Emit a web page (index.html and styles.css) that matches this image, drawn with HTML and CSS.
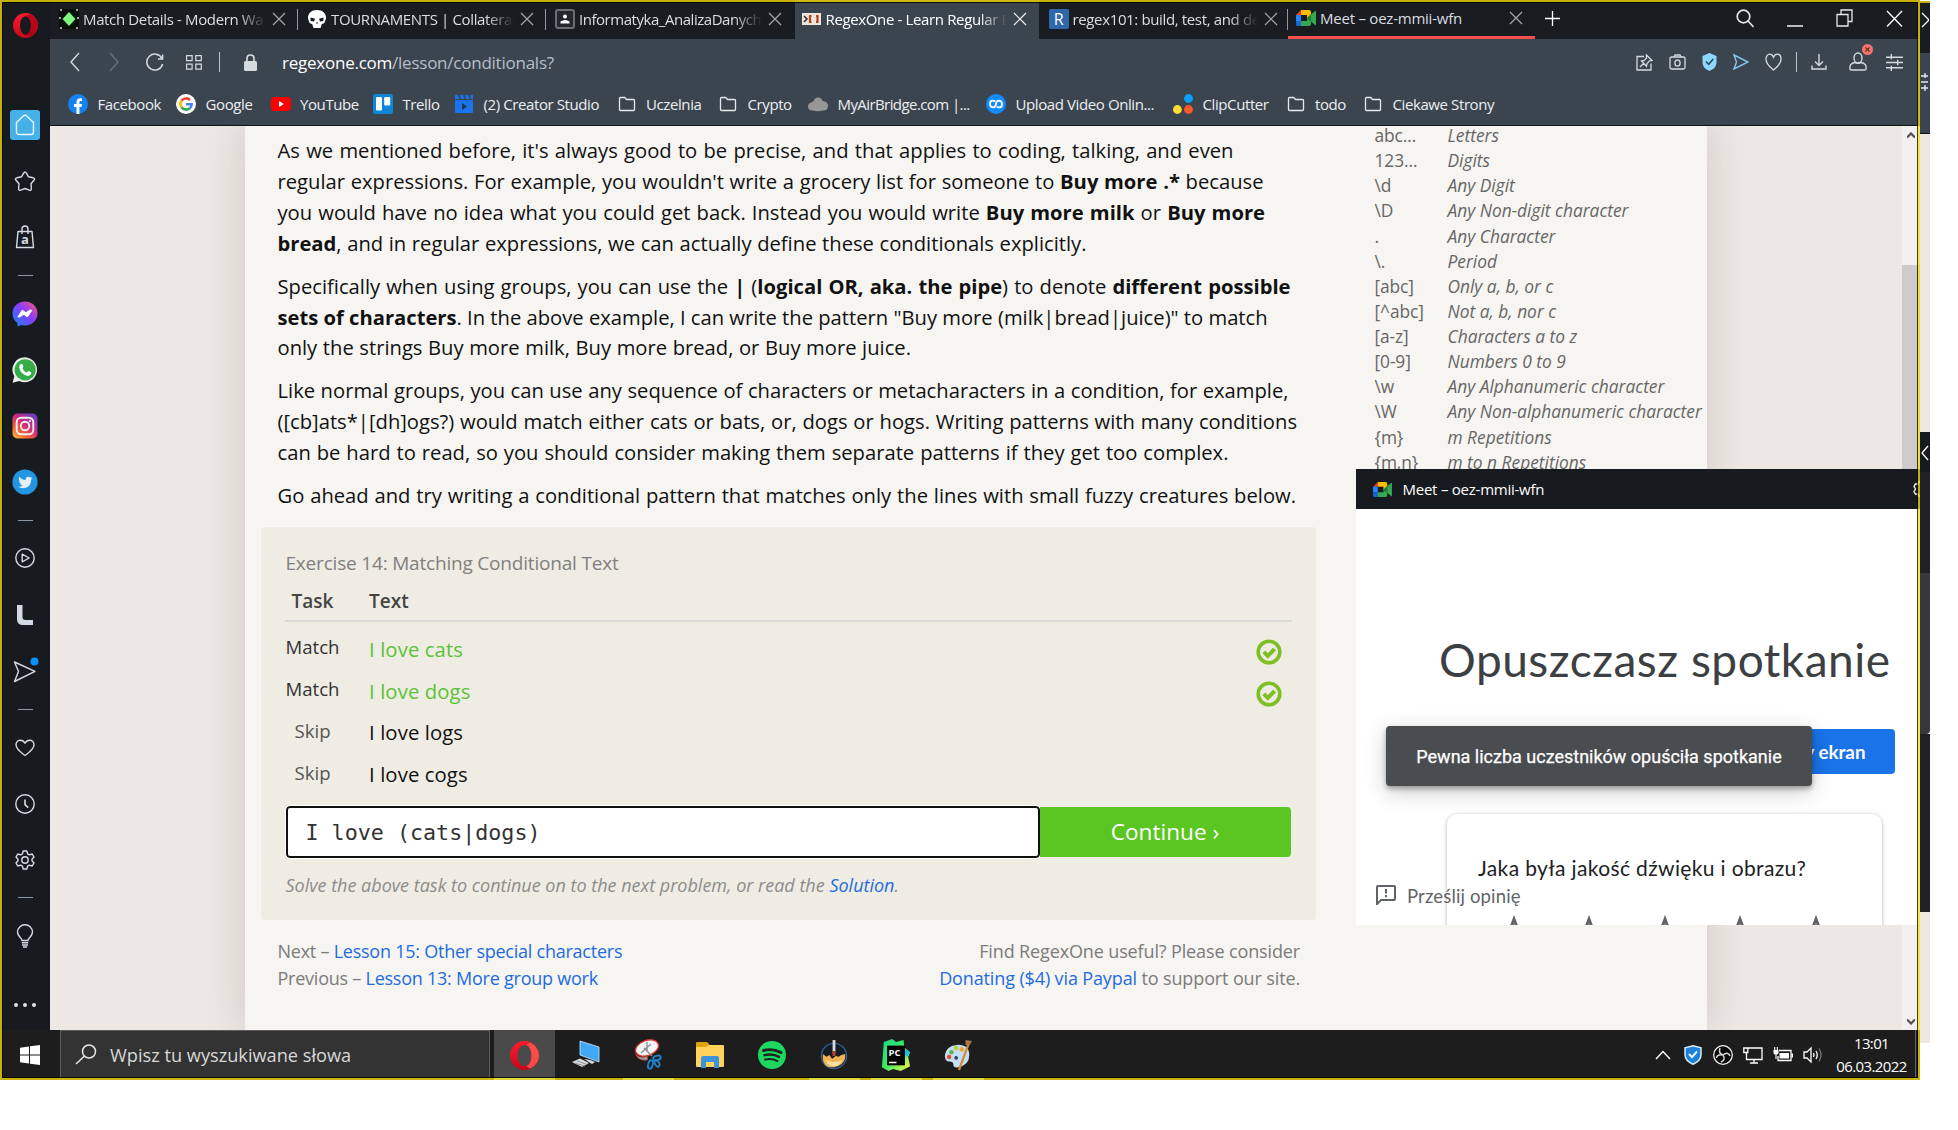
FILE: index.html
```html
<!DOCTYPE html>
<html lang="pl">
<head>
<meta charset="utf-8">
<title>RegexOne - Learn Regular Expressions</title>
<link rel="stylesheet" href="styles.css">
</head>
<body>
<svg class="defs" aria-hidden="true">
  <defs>
    <linearGradient id="g-opera" x1="0" y1="0" x2="0" y2="1"><stop offset="0" stop-color="#ff1b2d"/><stop offset="1" stop-color="#c40a1c"/></linearGradient>
    <linearGradient id="g-msg" x1="0" y1="1" x2="1" y2="0"><stop offset="0" stop-color="#0a8cff"/><stop offset=".55" stop-color="#8a3bff"/><stop offset="1" stop-color="#ff5a6c"/></linearGradient>
    <linearGradient id="g-ig" x1="0" y1="1" x2=".8" y2="0"><stop offset="0" stop-color="#fcc24e"/><stop offset=".3" stop-color="#f3672f"/><stop offset=".6" stop-color="#d32a7c"/><stop offset="1" stop-color="#6a3fc0"/></linearGradient>
    <linearGradient id="g-pc" x1="0" y1="0" x2="1" y2="1"><stop offset="0" stop-color="#21d789"/><stop offset=".5" stop-color="#3bea62"/><stop offset="1" stop-color="#fcf84a"/></linearGradient>
    <symbol id="close" viewBox="0 0 14 14"><path d="M1 1l12 12M13 1L1 13" fill="none" stroke="currentColor" stroke-width="1.2"/></symbol>
    <symbol id="folder" viewBox="0 0 20 20"><path d="M2.5 4.5c0-.6.4-1 1-1h4.3l1.7 2h7c.6 0 1 .4 1 1v9c0 .6-.4 1-1 1h-13c-.6 0-1-.4-1-1z" fill="none" stroke="#e6e9ec" stroke-width="1.3"/></symbol>
    <symbol id="opera" viewBox="0 0 26 26"><path fill="url(#g-opera)" fill-rule="evenodd" d="M13 0a13 13 0 1 0 0 26 13 13 0 0 0 0-26zm0 3.5c3.3 0 5.6 4.2 5.6 9.5s-2.3 9.5-5.6 9.5-5.6-4.2-5.6-9.5S9.700 3.500 13 3.500z"/><path fill="#a70014" d="M13 3.500C16 .8 20 1.500 22 4c5 5 5 13 0 18-2 2.500-6 3.200-9 .5 3.300 0 5.600-4.200 5.600-9.500S16.300 3.500 13 3.500z" opacity=".75"/></symbol>
    <symbol id="opera-lit" viewBox="0 0 26 26"><path fill="url(#g-opera)" fill-rule="evenodd" d="M13 0a13 13 0 1 0 0 26 13 13 0 0 0 0-26zm0 3.500c3.600 0 6.200 4.200 6.200 9.500s-2.600 9.500-6.200 9.500-6.200-4.200-6.200-9.500S9.400 3.500 13 3.500z"/><path fill="#ff5a52" d="M19 1.700c4.200 2.500 7 6.700 7 11.300s-2.800 8.800-7 11.300c-1.500.3-3-.3-4-1.800 2.600-1.300 4.200-5 4.200-9.500S17.600 4.800 15 3.500c1-1.500 2.500-2.100 4-1.800z" opacity=".8"/></symbol>
    <symbol id="meet" viewBox="0 0 20 18"><path fill="#e8402f" d="M0 6L5 1v5z"/><path fill="#fbbc04" d="M5 1h8c1 0 2 .7 2 2v4l-4 3V6H5z"/><path fill="#2684fc" d="M0 6h5v6H0z"/><path fill="#1a66d6" d="M0 12h5v5H1.500C.6 17 0 16.400 0 15.500z"/><path fill="#34a853" d="M5 12h6v-2l4 1v4c0 1.300-1 2-2 2H5z"/><path fill="#188038" d="M11 9l4-4v8z"/><path fill="#34a853" d="M15 5.500L19 2c.6-.4 1 0 1 .5v13c0 .6-.4.900-1 .5l-4-3.500z"/></symbol>
    <symbol id="heart" viewBox="0 0 20 18"><path d="M10 16.500C8 15 1 10.500 1 5.800 1 3 3 1.200 5.400 1.200c2 0 3.600 1 4.600 3 1-2 2.600-3 4.600-3C17 1.200 19 3 19 5.800c0 4.700-7 9.200-9 10.700z" fill="none" stroke="currentColor" stroke-width="1.400" stroke-linejoin="round"/></symbol>
    <symbol id="check" viewBox="0 0 26 26"><circle cx="13" cy="13" r="10.800" fill="none" stroke="#7fbf26" stroke-width="3.600"/><path d="M7.800 12.800l4 4 6.800-6.800" fill="none" stroke="#7fbf26" stroke-width="4"/></symbol>
    <symbol id="tune" viewBox="0 0 16 16"><path d="M0 3h16M0 8h16M0 13h16M5 0v5M11 5.500v5M5 11v5" fill="none" stroke="currentColor" stroke-width="1.300"/></symbol>
    <symbol id="star" viewBox="0 0 20 19"><path d="M10 0l6 16v3H4v-3z" fill="#5f6368"/><path d="M10 8l2 11H8z" fill="#fff"/></symbol>
  </defs>
</svg>

<div class="desktop">
<div class="screen">
  <div class="upper">
    <nav class="rail">
      <div class="logo"><svg width="25" height="25"><use href="#opera"/></svg></div>
      <div class="ri"><span class="home"><svg width="20" height="22" viewBox="0 0 20 22"><path d="M1.500 8.500L8 2.200Q10 .5 12 2.200L18.500 8.500V18q0 2.500-2.500 2.500H4Q1.500 20.500 1.500 18z" fill="none" stroke="#eaf7ff" stroke-width="1.400"/></svg></span></div>
      <div class="ri"><svg width="22" height="21" viewBox="0 0 22 21"><path d="M9.600 2.200q1.400-2.400 2.800 0l2.100 3.600 4.600 1q2.400.8.900 2.500l-3 3.400.4 4.800q0 2.400-2.200 1.700L11 17.500l-4.200 1.700q-2.200.7-2.200-1.700l.4-4.800-3-3.400q-1.500-1.700.9-2.500l4.600-1z" fill="none" stroke="#d7dce2" stroke-width="1.400" stroke-linejoin="round"/></svg></div>
      <div class="ri"><svg width="20" height="24" viewBox="0 0 20 24"><path d="M3 6.500h14l1.500 16h-17zM7 9V4q0-3 3-3t3 3v5" fill="none" stroke="#d7dce2" stroke-width="1.400" stroke-linejoin="round"/><text x="10" y="19" text-anchor="middle" class="bag-a">a</text></svg></div>
      <div class="rs first"></div>
      <div class="ri"><svg width="26" height="26" viewBox="0 0 26 26"><path fill="url(#g-msg)" d="M13 .5c7.200 0 12.500 5.300 12.500 12S20.200 24.500 13 24.500c-1.300 0-2.500-.2-3.700-.5L5.500 25.600V22C2.300 19.800.5 16.500.5 12.500.5 5.800 5.800.5 13 .5z"/><path fill="#fff" d="M5.500 15.800l4-6.300q.7-.9 1.700-.2l2.700 2 3.800-2.600q1.700-.7 2.600.5l-4 6.200q-.9 1-1.900.3l-2.700-2-3.700 2.600q-1.800.8-2.500-.5z"/></svg></div>
      <div class="ri"><svg width="26" height="26" viewBox="0 0 26 26"><path fill="#ececec" d="M13 .3a12.500 12.500 0 1 1-5.800 23.800L.5 25.700l1.800-6.400A12.500 12.500 0 0 1 13 .3z"/><circle cx="13.200" cy="12.800" r="10.600" fill="#35ad46"/><path fill="#fff" d="M8.300 7.300c1-1.100 2-.7 2.300.1l.8 2.100c.2.600-.9 1.600-.9 1.900.9 2 2.500 3.300 4.300 4.100.5 0 1.300-1.500 1.900-1.400l2.400 1.200c.5.500 0 3-2.300 3.500-2.700.5-5.500-1.300-7.200-3.200-1.900-2.200-3.200-5.800-1.300-8.300z"/></svg></div>
      <div class="ri"><svg width="26" height="26" viewBox="0 0 26 26"><rect x=".5" y=".5" width="25" height="25" rx="5" fill="url(#g-ig)"/><rect x="4.700" y="4.700" width="16.600" height="16.600" rx="4.500" fill="none" stroke="#f3f0f3" stroke-width="1.900"/><circle cx="13" cy="13" r="4.300" fill="none" stroke="#f3f0f3" stroke-width="1.900"/><circle cx="17.900" cy="8" r="1.100" fill="#f3f0f3"/></svg></div>
      <div class="ri"><svg width="26" height="26" viewBox="0 0 26 26"><circle cx="13" cy="13" r="12.600" fill="#2196e3"/><path fill="#e9eef2" d="M20.500 9l-1.600.5 1.200-1.700-1.800.7c-1.800-1.900-5.200-.5-4.700 2.500-2.600 0-4.900-1.300-6.300-3.200-1 1.500-.3 3.200.9 4l-1.300-.3c0 1.500 1 2.600 2.300 3l-1.300.1c.4 1.100 1.400 1.800 2.700 1.900-1.400 1.100-2.900 1.300-4.300 1.200 6 3.600 13 .2 12.700-7z"/></svg></div>
      <div class="rs"></div>
      <div class="ri tall"><svg width="20" height="20" viewBox="0 0 20 20" fill="none" stroke="#d7dce2" stroke-width="1.400"><circle cx="10" cy="10" r="9.200"/><path d="M7.200 6.200l7 3.800-7 3.800z" stroke-linejoin="round"/></svg></div>
      <div class="ri tall"><svg width="18" height="20" viewBox="0 0 18 20"><path d="M1 0h5.500v12q0 3 3 3H17v5H7q-6 0-6-6z" fill="#d3dae6"/></svg></div>
      <div class="ri tall"><svg width="28" height="28" viewBox="0 0 28 28"><path d="M3.500 5L24 14.300 3.500 24.500l4-10z" fill="none" stroke="#d7dce2" stroke-width="1.400" stroke-linejoin="round"/><circle cx="23.500" cy="4.500" r="4" fill="#0a93ff"/></svg></div>
      <div class="rs"></div>
      <div class="ri"><svg class="pale" width="20" height="18"><use href="#heart"/></svg></div>
      <div class="ri"><svg width="20" height="20" viewBox="0 0 20 20" fill="none" stroke="#d7dce2" stroke-width="1.400"><circle cx="10" cy="10" r="9.200"/><path d="M10 5.500v5.200l3.200 3" stroke-width="1.600"/></svg></div>
      <div class="ri"><svg width="20" height="20" viewBox="0 0 20 20" fill="none" stroke="#d7dce2" stroke-width="1.400"><circle cx="10" cy="10" r="3.200"/><path stroke-linejoin="round" d="M8.200 1h3.600l.8 2.800 1.800 1 2.800-.8 1.800 3.100L17 9.200v1.600l2 2.100-1.800 3.100-2.800-.8-1.800 1-.8 2.800H8.200l-.8-2.800-1.800-1-2.800.8L1 12.900l2-2.100V9.200L1 7.100 2.800 4l2.800.8 1.800-1z"/></svg></div>
      <div class="rs"></div>
      <div class="ri"><svg width="18" height="24" viewBox="0 0 18 24" fill="none" stroke="#d7dce2" stroke-width="1.400"><path d="M6 16.500C5.500 13.500 1.500 12.500 1.500 8a7.500 7.200 0 0 1 15 0c0 4.500-4 5.500-4.500 8.500zM5.800 18.800h6.400M6 21h6M7 23h4"/></svg></div>
      <div class="ri dots"><i></i><i></i><i></i></div>
    </nav>

    <div class="browser">
      <header class="tabs">
        <div class="tab"><svg class="fav" width="20" height="20" viewBox="0 0 20 20"><path d="M0 0h20v20H0z" fill="#08120a"/><path d="M10 3l6.500 7-6.500 7-6.500-7z" fill="#7df57f"/><path d="M1 1h2M17 1h2M1 19h2M17 19h2M1 8v2M19 8v2" stroke="#e6c7e6" stroke-width="1.500"/></svg><span class="lbl fade">Match Details - Modern Wa</span><svg class="x" width="14" height="14"><use href="#close"/></svg></div>
        <div class="tab sep"><svg class="fav" width="20" height="20" viewBox="0 0 20 20"><path fill="#fff" d="M10 1c5.500 0 9 3.500 9 7.500 0 2.500-1 3-1.200 4.500-.4 1.500-2 1.500-3 2L13.500 19h-7l-1.300-4c-1-.5-2.600-.5-3-2C2 11.500 1 11 1 8.500 1 4.500 4.500 1 10 1z"/><path d="M3.500 8.500l4.500 1.300-1 2.700-3.300-.5zM16.500 8.500L12 9.800l1 2.700 3.300-.5zM10 12.500l1 2H9z" fill="#15181c"/></svg><span class="lbl fade">TOURNAMENTS | Collateral</span><svg class="x" width="14" height="14"><use href="#close"/></svg></div>
        <div class="tab sep"><svg class="fav" width="20" height="20" viewBox="0 0 20 20"><rect x="1" y="1" width="18" height="18" rx="2" fill="#24282d" stroke="#6b6f74" stroke-width="2"/><circle cx="10" cy="7.500" r="2" fill="#fff"/><path d="M5.500 14.500v-2q4.500-3 9 0v2z" fill="#fff"/></svg><span class="lbl tight fade">Informatyka_AnalizaDanych</span><svg class="x" width="14" height="14"><use href="#close"/></svg></div>
        <div class="tab on"><svg class="fav" width="19" height="20" viewBox="0 0 19 20"><rect x="0" y="4" width="19" height="12" fill="#ece6dd"/><path d="M2 7l3 3-3 3" fill="none" stroke="#35302c" stroke-width="1.500"/><path d="M9.500 7H8v6h1.500M14 7h1.500v6H14" fill="none" stroke="#b5401c" stroke-width="2.200"/></svg><span class="lbl fade">RegexOne - Learn Regular E</span><svg class="x" width="14" height="14"><use href="#close"/></svg></div>
        <div class="tab fifth"><span class="fav rfav">R</span><span class="lbl fade">regex101: build, test, and de</span><svg class="x" width="14" height="14"><use href="#close"/></svg></div>
        <div class="tab sep live"><svg class="fav" width="20" height="18"><use href="#meet"/></svg><span class="lbl">Meet – oez-mmii-wfn</span><svg class="x" width="14" height="14"><use href="#close"/></svg></div>
        <div class="plus"><svg width="15" height="15" viewBox="0 0 15 15"><path d="M7.500 0v15M0 7.500h15" stroke="#fff" stroke-width="1.300"/></svg></div>
        <div class="wincontrols">
          <svg width="18" height="19" viewBox="0 0 18 19" fill="none" stroke="#e4e4e4" stroke-width="1.700"><circle cx="7.500" cy="7.500" r="6.300"/><path d="M12 12l5.500 6"/></svg>
          <svg width="16" height="19" viewBox="0 0 16 19"><path d="M0 17h16" stroke="#fff" stroke-width="1.400"/></svg>
          <svg width="17" height="19" viewBox="0 0 17 19" fill="none" stroke="#e8e8e8" stroke-width="1.300"><path d="M1 5.500h11v11.500H1zM5 5.500V1h11v11.500h-4"/></svg>
          <svg width="17" height="19" viewBox="0 0 17 19"><path d="M1 2l15 15.500M16 2L1 17.500" stroke="#fff" stroke-width="1.300"/></svg>
        </div>
      </header>

      <div class="toolbar">
        <svg width="10" height="20" viewBox="0 0 10 20"><path d="M9 1L1 10l8 9" fill="none" stroke="#d5dadf" stroke-width="1.400"/></svg>
        <svg class="fwd" width="10" height="20" viewBox="0 0 10 20"><path d="M1 1l8 9-8 9" fill="none" stroke="#66727d" stroke-width="1.400"/></svg>
        <svg class="reload" width="18" height="18" viewBox="0 0 18 18"><path d="M16 5.500A8 8 0 1 0 16.600 11M16.600 1.500V6H12" fill="none" stroke="#d5dadf" stroke-width="1.500"/></svg>
        <svg class="speed" width="16" height="15" viewBox="0 0 16 15" fill="none" stroke="#d5dadf" stroke-width="1.200"><path d="M.6.600h5.500v5H.6zM9.800.600h5.500v5H9.800zM.6 9.200h5.500v5H.6zM9.800 9.200h5.500v5H9.800z"/></svg>
        <i class="vbar"></i>
        <svg class="lock" width="13" height="17" viewBox="0 0 13 17"><rect x="0" y="7" width="13" height="10" rx="1.500" fill="#d5dadf"/><path d="M3 7.500V4.500q0-3.500 3.500-3.500T10 4.500v3" fill="none" stroke="#d5dadf" stroke-width="1.700"/></svg>
        <span class="url"><b>regexone.com</b>/lesson/conditionals?</span>
        <div class="tools">
          <svg width="17" height="17" viewBox="0 0 17 17" fill="none" stroke="#d5dadf" stroke-width="1.300"><path d="M8 2.500H1V16h14V9.500M4 13l4-4M10.500 1l5.500 5.500-2.500.3-2.500 2.700-.5 2.800L5.500 7l2.800-.5L10.500 4z"/></svg>
          <svg width="17" height="16" viewBox="0 0 17 16" fill="none" stroke="#d5dadf" stroke-width="1.300"><rect x="1" y="3" width="15" height="12" rx="1.500"/><path d="M5 3l1-2h5l1 2"/><ellipse cx="8.500" cy="9" rx="2.600" ry="3.200"/></svg>
          <svg width="15" height="18" viewBox="0 0 15 18"><path d="M7.500 0l7 3v6c0 4.500-3 7.500-7 9-4-1.500-7-4.500-7-9V3z" fill="#8fd6ff"/><path d="M4 8.500l2.700 2.800L11.200 6" fill="none" stroke="#2d4a5e" stroke-width="1.600"/></svg>
          <svg width="16" height="16" viewBox="0 0 16 16"><path d="M1 1l14 7-14 7 2.500-7z" fill="none" stroke="#86c7ee" stroke-width="1.400"/></svg>
          <svg class="pale" width="17" height="18" viewBox="0 0 17 18"><path d="M8.500 17C6.500 15 1 11.500 1 6.200 1 3.200 2.600 1.200 4.700 1.200c1.700 0 3 1 3.800 3 .8-2 2.100-3 3.800-3C14.400 1.200 16 3.200 16 6.200 16 11.500 10.500 15 8.500 17z" fill="none" stroke="currentColor" stroke-width="1.300"/></svg>
          <i class="vbar two"></i>
          <svg width="16" height="16" viewBox="0 0 16 16" fill="none" stroke="#d5dadf" stroke-width="1.400"><path d="M8 0v11M4 7.500L8 11.500l4-4M1 11.500V15h14v-3.500"/></svg>
          <svg class="user" width="24" height="28" viewBox="0 0 24 28"><ellipse cx="9" cy="14" rx="4" ry="5" fill="none" stroke="#d5dadf" stroke-width="1.400"/><path d="M1 25q-1-5.500 5-6.500 3 1.500 6 0 6 1 5 6.500 0 1-1.500 1h-13Q1 26 1 25z" fill="none" stroke="#d5dadf" stroke-width="1.400"/><circle cx="18.500" cy="5.500" r="5.500" fill="#f4736f"/><path d="M16.500 3.500l4 4M20.500 3.500l-4 4" stroke="#6b2523" stroke-width="1.100"/></svg>
          <svg class="pale" width="17" height="17"><use href="#tune"/></svg>
        </div>
      </div>

      <div class="marks">
        <span class="mk"><svg width="20" height="20" viewBox="0 0 20 20"><circle cx="10" cy="10" r="10" fill="#1482f0"/><path fill="#fff" d="M8.500 20v-7H6v-3h2.500V8c0-2.500 1.500-3.700 3.700-3.700l1.800.2V7h-1.200c-1.100 0-1.400.6-1.400 1.400V10H14l-.5 3h-2.100v7z"/></svg>Facebook</span>
        <span class="mk"><svg width="20" height="20" viewBox="0 0 20 20"><circle cx="10" cy="10" r="10" fill="#fff"/><g fill="none" stroke-width="2.600"><path d="M5.500 6.800A5.600 5.600 0 0 1 14 6" stroke="#ea4335"/><path d="M5.500 6.800a5.700 5.700 0 0 0 0 6.500" stroke="#fbbc05"/><path d="M5.500 13.200a5.600 5.600 0 0 0 8.300 1" stroke="#34a853"/><path d="M13.800 14.200A5.600 5.600 0 0 0 15.600 10.200H10" stroke="#4285f4"/></g></svg>Google</span>
        <span class="mk"><svg width="20" height="20" viewBox="0 0 20 20"><rect y="3" width="20" height="14" rx="3.500" fill="#f00"/><path d="M8 7l5 3-5 3z" fill="#fff"/></svg>YouTube</span>
        <span class="mk"><svg width="20" height="20" viewBox="0 0 20 20"><rect width="20" height="20" rx="2.500" fill="#0b86d8"/><rect x="3" y="3" width="6" height="13.500" rx="1" fill="#fff"/><rect x="11.200" y="3" width="6" height="8.500" rx="1" fill="#fff"/></svg>Trello</span>
        <span class="mk"><svg width="20" height="20" viewBox="0 0 20 20"><path d="M1 6h18v12q0 1-1 1H2q-1 0-1-1z" fill="#1b74ee"/><path d="M1 1h3l1.500 4H1zM6 1h3l1.500 4H7zM11 1h3l1.500 4H12zM16 1h3v4h-2z" fill="#1b74ee"/><path d="M8 9l5 3.500L8 16z" fill="#22334f"/></svg>(2) Creator Studio</span>
        <span class="mk"><svg width="20" height="20"><use href="#folder"/></svg>Uczelnia</span>
        <span class="mk"><svg width="20" height="20"><use href="#folder"/></svg>Crypto</span>
        <span class="mk narrow"><svg width="20" height="20" viewBox="0 0 20 20"><path d="M5 16.500Q0 16.500 0 12.500 0 9.500 3 8.500 4 7.500 5.500 7.500 6.500 3.500 10 3.500T14.500 7q5.500.5 5.500 5T15 16.500q-5 1.500-10 0z" fill="#979797"/></svg>MyAirBridge.com |...</span>
        <span class="mk"><svg width="20" height="20" viewBox="0 0 20 20"><circle cx="10" cy="10" r="10" fill="#0f8cff"/><path d="M9.300 7.200Q4 5.200 4 9.700T8.500 13Q10 12 10 10t1.500-3Q16 6 16 10.300t-5.300 2.500" fill="none" stroke="#fff" stroke-width="1.900"/></svg>Upload Video Onlin...</span>
        <span class="mk"><svg width="20" height="20" viewBox="0 0 20 20"><circle cx="15.500" cy="4.500" r="4.400" fill="#0aa0ff"/><circle cx="4.400" cy="15.500" r="4.400" fill="#ffdd33"/><circle cx="15.500" cy="15.500" r="4.400" fill="#ff5a26"/></svg>ClipCutter</span>
        <span class="mk"><svg width="20" height="20"><use href="#folder"/></svg>todo</span>
        <span class="mk"><svg width="20" height="20"><use href="#folder"/></svg>Ciekawe Strony</span>
      </div>

      <main class="page">
        <div class="sheet">
          <article class="article">
            <p>
              <span class="ln w955">As we mentioned before, it's always good to be precise, and that applies to coding, talking, and even</span>
              <span class="ln w985">regular expressions. For example, you wouldn't write a grocery list for someone to <b>Buy more .*</b> because</span>
              <span class="ln w986">you would have no idea what you could get back. Instead you would write <b>Buy more milk</b> or <b>Buy more</b></span>
              <span class="ln w808"><b>bread</b>, and in regular expressions, we can actually define these conditionals explicitly.</span>
            </p>
            <p>
              <span class="ln w1012">Specifically when using groups, you can use the <b>|</b> (<b>logical OR, aka. the pipe</b>) to denote <b>different possible</b></span>
              <span class="ln w982"><b>sets of characters</b>. In the above example, I can write the pattern "Buy more (milk|bread|juice)" to match</span>
              <span class="ln w632">only the strings Buy more milk, Buy more bread, or Buy more juice.</span>
            </p>
            <p>
              <span class="ln w1010">Like normal groups, you can use any sequence of characters or metacharacters in a condition, for example,</span>
              <span class="ln w1019">([cb]ats*|[dh]ogs?) would match either cats or bats, or, dogs or hogs. Writing patterns with many conditions</span>
              <span class="ln w950">can be hard to read, so you should consider making them separate patterns if they get too complex.</span>
            </p>
            <p>
              <span class="ln w1018">Go ahead and try writing a conditional pattern that matches only the lines with small fuzzy creatures below.</span>
            </p>

            <section class="exercise">
              <h2>Exercise 14: Matching Conditional Text</h2>
              <div class="row head"><span>Task</span><span>Text</span></div>
              <div class="row"><span>Match</span><span class="txt ok">I love cats</span><svg width="26" height="26"><use href="#check"/></svg></div>
              <div class="row"><span>Match</span><span class="txt ok">I love dogs</span><svg width="26" height="26"><use href="#check"/></svg></div>
              <div class="row"><span class="skip">Skip</span><span class="txt up">I love logs</span></div>
              <div class="row"><span class="skip">Skip</span><span class="txt up">I love cogs</span></div>
              <div class="answer"><div class="field">I love (cats|dogs)</div><div class="go">Continue ›</div></div>
              <p class="hint">Solve the above task to continue on to the next problem, or read the <a>Solution</a>.</p>
            </section>

            <footer class="foot">
              <div class="left">Next – <a>Lesson 15: Other special characters</a><br>Previous – <a>Lesson 13: More group work</a></div>
              <div class="right">Find RegexOne useful? Please consider<br><a>Donating ($4) via Paypal</a> to support our site.</div>
            </footer>
          </article>
          <dl class="ref">
            <dt>abc…</dt><dd>Letters</dd>
            <dt>123…</dt><dd>Digits</dd>
            <dt>\d</dt><dd>Any Digit</dd>
            <dt>\D</dt><dd>Any Non-digit character</dd>
            <dt>.</dt><dd>Any Character</dd>
            <dt>\.</dt><dd>Period</dd>
            <dt>[abc]</dt><dd>Only a, b, or c</dd>
            <dt>[^abc]</dt><dd>Not a, b, nor c</dd>
            <dt>[a-z]</dt><dd>Characters a to z</dd>
            <dt>[0-9]</dt><dd>Numbers 0 to 9</dd>
            <dt>\w</dt><dd>Any Alphanumeric character</dd>
            <dt>\W</dt><dd>Any Non-alphanumeric character</dd>
            <dt>{m}</dt><dd>m Repetitions</dd>
            <dt>{m,n}</dt><dd>m to n Repetitions</dd>
          </dl>
        </div>
        <div class="scroll">
          <svg width="8" height="7" viewBox="0 0 8 7"><path d="M0 5.500L4 1.500l4 4" fill="none" stroke="#505050" stroke-width="2.200"/></svg>
          <div class="thumb"></div>
          <svg class="down" width="8" height="7" viewBox="0 0 8 7"><path d="M0 1.500l4 4 4-4" fill="none" stroke="#505050" stroke-width="2.200"/></svg>
        </div>
      </main>
    </div>
  </div>

  <div class="taskbar">
    <div class="start"><svg width="20" height="20" viewBox="0 0 20 20"><path fill="#fff" d="M0 2.800l9-1.300v8H0zM10 1.300L20 0v9.500H10zM0 10.500h9v8l-9-1.300zM10 10.500h10V20l-10-1.300z"/></svg></div>
    <div class="find"><svg width="22" height="21" viewBox="0 0 22 21" fill="none" stroke="#e6e6e6" stroke-width="1.500"><circle cx="14" cy="7.500" r="6.500"/><path d="M9.500 12L1 20"/></svg><span>Wpisz tu wyszukiwane słowa</span></div>
    <div class="app active"><svg width="29" height="29"><use href="#opera-lit"/></svg></div>
    <div class="app"><svg width="30" height="32" viewBox="0 0 30 32"><path d="M9 2l19 6v15L9 16z" fill="#3fa9f5" stroke="#cfe9fb" stroke-width=".8"/><path d="M1 23l8-3.500 9 4.500-7 4zM13 20l6 1 5 2-3 2z" fill="#d9dde0"/><path d="M3 24l11 3M6 22l10 3.500" stroke="#8b8f92"/></svg></div>
    <div class="app run"><svg width="28" height="32" viewBox="0 0 28 32"><ellipse cx="13" cy="9" rx="12" ry="7.500" transform="rotate(-20 13 9)" fill="#f6f6f6" stroke="#d2322d" stroke-width="1.400"/><path d="M1.500 15q4 5 12 2.500v3.500q-9 1.500-12-6z" fill="#9a9a9a" stroke="#c23a35" stroke-width=".6"/><path d="M13 3v10M7 14l10-9M10 9l8 8" stroke="#8d9296" stroke-width="1.400"/><g fill="none" stroke="#1e86d2" stroke-width="1.800"><ellipse cx="23" cy="19" rx="3.800" ry="2.300" transform="rotate(-15 23 19)"/><ellipse cx="16.500" cy="25.500" rx="2.300" ry="4.300" transform="rotate(15 16.500 25.500)"/><ellipse cx="23" cy="24.500" rx="2" ry="3.500" transform="rotate(-35 23 24.500)"/></g></svg></div>
    <div class="app"><svg width="28" height="26" viewBox="0 0 28 26"><path d="M0 1q0-1 1-1h10l3 3h12v6H0z" fill="#e0a20c"/><path d="M0 5h10l3-2h14q1 0 1 1v20q0 1-1 1H1q-1 0-1-1z" fill="#ffd35c"/><path d="M5 26V16q0-2 2-2h14q2 0 2 2v10h-5v-6h-8v6z" fill="#3c93dc"/></svg></div>
    <div class="app"><svg width="28" height="28" viewBox="0 0 28 28"><circle cx="14" cy="14" r="14" fill="#1ed760"/><g fill="none" stroke="#1a241d" stroke-linecap="round"><path d="M5.500 9.500q9-2.500 17.500 2" stroke-width="2.900"/><path d="M6.500 14.200q8-2 14.500 1.700" stroke-width="2.400"/><path d="M7 18.500q7-1.500 12.500 1.600" stroke-width="1.900"/></g></svg></div>
    <div class="app run"><svg width="28" height="30" viewBox="0 0 30 32"><circle cx="15" cy="17" r="13.500" fill="#141b24" stroke="#2f5e91" stroke-width="1.500"/><path d="M3 15l4 3 3-2 3 4 4-3 3 1 3-2 4-1q1 12-12 14T3 15z" fill="#f3b152"/><path d="M6 21q9 5 18 0-3 7-9 7t-9-7z" fill="#fbe0a0"/><path d="M13.500 0h3v12h-3z" fill="#d5dadd"/><path d="M13 12h4l-.5 5h-3z" fill="#b5402f"/></svg></div>
    <div class="app run"><svg width="30" height="34" viewBox="0 0 32 34"><path d="M3 3l9-3 4 3 8-2 1 8 6 5-2 5 2 10-10 5-8-2-5 2-7-4z" fill="url(#g-pc)"/><path d="M24 9l7 5-3 5-4-3z" fill="#12c2ef"/><rect x="6.500" y="7" width="19" height="21" fill="#000"/><text x="8" y="18" class="pc">PC</text><path d="M8.500 25h8" stroke="#fff" stroke-width="1.600"/></svg></div>
    <div class="app run"><svg width="30" height="34" viewBox="0 0 32 34"><path d="M16 6q12 0 12 11T16 30q-5 1-5-3 0-3-4-3-5 0-5-6Q3 7 16 6z" fill="#c3dff0"/><circle cx="9" cy="14" r="2.400" fill="#66b04a"/><circle cx="14" cy="9.500" r="2.400" fill="#b9cf4a"/><circle cx="20" cy="11" r="2.500" fill="#f2a632"/><circle cx="6.500" cy="19" r="2.400" fill="#e6493a"/><circle cx="14" cy="20" r="2" fill="#26445c"/><path d="M27 6L17 33" stroke="#d18a3d" stroke-width="2.400"/><path d="M24 1l7 1-3 5-4-1z" fill="#a8764a"/></svg></div>
    <div class="tray">
      <span><svg width="16" height="10" viewBox="0 0 16 10"><path d="M1 9l7-7.500L15 9" fill="none" stroke="#fff" stroke-width="1.400"/></svg></span>
      <span><svg width="18" height="20" viewBox="0 0 18 20"><path d="M9 .8l8 2v7c0 4.500-3.500 7.500-8 9.400C4.500 17.300 1 14.300 1 9.800v-7z" fill="#1b83db" stroke="#d6ebf9" stroke-width="1.500"/><path d="M5 9l3 3.200L13 6.500" fill="none" stroke="#fff" stroke-width="1.900"/></svg></span>
      <span><svg width="20" height="20" viewBox="0 0 20 20"><circle cx="10" cy="10" r="9.300" fill="#0b0b0b" stroke="#eee" stroke-width="1.300"/><path d="M7 3q-2 5 3 7 5-4 7 1M10 10q3 5-2 7M10 10Q4 9 3.500 13" fill="none" stroke="#d8d8d8" stroke-width="1.500"/></svg></span>
      <span><svg width="20" height="17" viewBox="0 0 20 17" fill="none" stroke="#fff" stroke-width="1.300"><path d="M5 1h14v11.500H3.500V6M11 12.500V16M7 16h8M.8 1h4v4.500h-4z"/></svg></span>
      <span><svg width="20" height="16" viewBox="0 0 20 16"><path d="M6 3.500h12v10H5V9" fill="none" stroke="#fff" stroke-width="1.300"/><path d="M6.500 6H16v5.500H6.500zM18.500 6.500H20v4h-1.500zM.5 3h5v3q0 1.500-2.500 1.500T.5 6z" fill="#fff"/><path d="M1.700 0v3M4.300 0v3M3 7v5" stroke="#fff" stroke-width="1.100"/></svg></span>
      <span><svg width="20" height="18" viewBox="0 0 20 18" fill="none" stroke="#fff" stroke-width="1.300"><path d="M1 6h3l4-4v14l-4-4H1z"/><path d="M10.500 7q1 2 0 4M13 5q2.500 4 0 8"/><path d="M16 2.500q4 6.500 0 13" stroke="#777"/></svg></span>
      <div class="clock">13:01<br>06.03.2022</div>
    </div>
  </div>

  <aside class="pip">
    <div class="piphead"><svg width="19" height="17"><use href="#meet"/></svg><span>Meet – oez-mmii-wfn</span><svg class="gear" width="16" height="16" viewBox="0 0 16 16" fill="none" stroke="#e8e8e8" stroke-width="1.400"><path d="M6.500 1h3l.7 2.200 2.300-.4 1.500 2.600L12.500 8l1.500 2.600-1.500 2.600-2.300-.4-.7 2.200h-3l-.7-2.200-2.300.4L2 10.600 3.500 8 2 5.400l1.500-2.600 2.300.4z"/></svg></div>
    <div class="pipbody">
      <h1>Opuszczasz spotkanie</h1>
      <div class="back">y ekran</div>
      <div class="card">
        <div class="q">Jaka była jakość dźwięku i obrazu?</div>
        <div class="stars">
          <svg width="20" height="19"><use href="#star"/></svg>
          <svg width="20" height="19"><use href="#star"/></svg>
          <svg width="20" height="19"><use href="#star"/></svg>
          <svg width="20" height="19"><use href="#star"/></svg>
          <svg width="20" height="19"><use href="#star"/></svg>
        </div>
      </div>
      <div class="toast">Pewna liczba uczestników opuściła spotkanie</div>
      <div class="feedback"><svg width="20" height="20" viewBox="0 0 20 20"><path d="M1 19V2q0-1 1-1h16q1 0 1 1v12q0 1-1 1H5z" fill="none" stroke="#5f6368" stroke-width="2"/><path d="M10 4v4.500M10 10v2.200" stroke="#5f6368" stroke-width="2"/></svg>Prześlij opinię</div>
    </div>
  </aside>
  <div class="frame"></div>
</div>

<div class="second">
  <div class="s-tabs"><svg width="8" height="16" viewBox="0 0 8 16"><path d="M1 1l7 7M1 15l7-7" stroke="#fff" stroke-width="1.300"/></svg></div>
  <div class="s-bar"><svg width="7" height="18" viewBox="0 0 7 18"><path d="M0 3h7M0 9h7M0 15h7M4 0v5M4 12v6" stroke="#e6e9ec" stroke-width="1.400"/></svg></div>
  <div class="s-page"></div>
  <div class="s-head"><svg width="8" height="16" viewBox="0 0 8 16"><path d="M7 1L1 8l6 7" fill="none" stroke="#fff" stroke-width="1.300"/></svg></div>
  <div class="s-dark"></div>
  <div class="s-gray"></div>
  <div class="s-dark grow"></div>
  <div class="s-end"></div>
</div>
</div>
</body>
</html>
```
FILE: styles.css
```css
* { box-sizing: border-box; }
body { margin: 0; background: #fff; font-family: "Open Sans", "Noto Sans", sans-serif; }
svg { display: block; flex: none; }
p, h1, h2, dl, dd { margin: 0; font-weight: 400; }
.defs { position: absolute; width: 0; height: 0; }
.pale { color: #d5dadf; }

.desktop { width: 1958px; height: 1130px; display: flex; align-items: flex-start; overflow: hidden; }
.screen { position: relative; width: 1920px; height: 1080px; flex: none; overflow: hidden; }
.upper { display: flex; height: 1030px; }

/* yellow capture frame drawn over the whole screen */
.frame { position: absolute; inset: 0; border: 2px solid rgba(254, 224, 4, .76); box-shadow: inset 0 0 0 1px rgba(0, 0, 0, .75); pointer-events: none; }

/* left rail */
.rail { width: 50px; flex: none; background: #171a1f; display: flex; flex-direction: column; align-items: center; }
.logo { height: 97px; padding-top: 13px; }
.ri { height: 56px; width: 50px; display: flex; align-items: center; justify-content: center; flex: none; }
.ri.tall { height: 56.5px; }
.home { width: 30px; height: 30px; border-radius: 3px; background: #45b1e8; display: flex; align-items: center; justify-content: center; }
.rs { height: 20px; width: 50px; display: flex; align-items: center; justify-content: center; flex: none; }
.rs::before { content: ""; width: 15px; height: 1px; background: #8a99a5; }
.rs.first { height: 21px; }
.dots { margin-top: auto; height: 50px; gap: 3px; }
.dots i { width: 4px; height: 4px; border-radius: 50%; background: #dfe3e8; margin: 0 1px; }
.bag-a { font: 700 13px "Open Sans", sans-serif; fill: #d7dce2; }

/* browser chrome */
.browser { flex: 1; min-width: 0; display: flex; flex-direction: column; }
.tabs { height: 39px; background: #191c21; display: grid; grid-template-columns: 248px 248px 248.5px 244px 249.5px 247px 36px 1fr; }
.tab { position: relative; display: grid; grid-template-columns: 20px 1fr 14px; column-gap: 4px; align-items: center; padding: 0 12.500px 1px 9px; color: #dcdee0; font-size: 15px; letter-spacing: -.36px; min-width: 0; }
.tab.sep::before { content: ""; position: absolute; left: -1px; top: 9px; width: 1px; height: 21px; background: #8c99a6; }
.tab.on { background: #3b4550; color: #fff; padding-left: 7px; padding-right: 11.500px; }
.tab.fifth { padding-left: 10px; }
.tab.live { border-bottom: 3px solid #f4504c; padding-left: 8px; padding-bottom: 0; letter-spacing: -.23px; }
.lbl { white-space: nowrap; }
.tight { letter-spacing: -.46px; }
.fade { -webkit-mask-image: linear-gradient(90deg, #000 84%, transparent 99%); mask-image: linear-gradient(90deg, #000 84%, transparent 99%); }
.x { color: #a4a8ad; }
.tab.on .x { color: #f2f2f2; }
.rfav { width: 20px; height: 20px; border-radius: 2px; background: #2f67ab; color: #fff; text-align: center; line-height: 20px; font-size: 16px; }
.plus { display: flex; align-items: center; justify-content: center; padding: 0 2px 2px 0; }
.wincontrols { display: flex; justify-content: flex-end; align-items: center; gap: 33px; padding: 0 17px 3px 0; }

.toolbar { height: 46px; background: #3b4550; display: flex; align-items: center; padding-left: 20px; }
.fwd { margin-left: 29px; }
.reload { margin-left: 27px; }
.speed { margin-left: 22px; }
.vbar { width: 1px; height: 20px; background: #bfc6cc; margin-left: 17px; }
.lock { margin-left: 24px; }
.url { margin-left: 25px; font-size: 17px; letter-spacing: -.24px; color: #b4bfca; }
.url b { font-weight: 400; color: #fff; }
.tools { margin-left: auto; display: flex; align-items: center; gap: 16px; padding-right: 17px; }
.tools svg:last-child { margin-left: -3px; }
.vbar.two { margin: 0 -2px; }
.user { margin: 0 0 8px 6px; }

.marks { height: 41px; background: #3b4550; border-bottom: 1px solid #101318; padding: 0 0 3px 18px; display: grid; align-items: center; grid-template-columns: 108px 94.500px 102.500px 81px 162.500px 101.500px 90px 178px 187px 112.500px 77.500px 1fr; }
.mk { display: flex; align-items: center; gap: 9.500px; font-size: 15px; letter-spacing: -.4px; color: #eceef0; white-space: nowrap; line-height: 36px; }
.mk.narrow { letter-spacing: -.58px; }

/* web page */
.page { flex: 1; background: #ede8e4; position: relative; display: flex; overflow: hidden; min-height: 0; }
.sheet { width: 1462px; height: 904px; margin-left: 195px; background: #f6f5f1; box-shadow: 0 0 38px rgba(60, 40, 30, .16); display: flex; align-items: flex-start; flex: none; }
.article { width: 1097px; padding: 9.300px 0 0 32.500px; color: #111; font-size: 20.200px; line-height: 30.800px; }
.article > p + p { margin-top: 12.300px; }
.ln { display: block; white-space: nowrap; text-align: justify; text-align-last: justify; }
.w955 { width: 956px; } .w985 { width: 986px; } .w986 { width: 987.500px; } .w808 { width: 809px; }
.w1012 { width: 1013px; } .w982 { width: 983px; } .w632 { width: 633.500px; } .w1010 { width: 1011px; }
.w1019 { width: 1019.500px; } .w950 { width: 951px; } .w1018 { width: 1018.500px; }

.exercise { margin: 16px 0 0 -16.500px; width: 1055px; height: 393px; background: #efece3; border-radius: 4px; padding: 20.600px 24px 0 24.500px; color: #333; font-size: 19px; }
.exercise h2 { font-size: 19px; line-height: 30px; letter-spacing: -.19px; color: #808080; }
.row { height: 42px; line-height: 42px; display: grid; grid-template-columns: 56px 1fr 26px; column-gap: 28.500px; margin-left: -1px; padding-right: 10.500px; }
.row > span:first-child { text-align: center; font-size: 18.600px; }
.row > .skip { color: #555; }
.row.head { margin: 4.500px 0 4px -1px; height: 40px; line-height: 39.500px; font-weight: 600; color: #444; border-bottom: 2px solid #dadbd9; }
.row.head > span:first-child { font-size: 19px; }
.row svg { margin-top: 12.500px; }
.txt { font-size: 20.300px; letter-spacing: .1px; padding-top: 2px; color: #111; }
.txt.up { padding-top: 1px; }
.ok { color: #5bc236; }
.answer { display: flex; margin: 12px 0 0 -1px; height: 52px; }
.field { width: 754px; background: #fff; border: 2px solid #101010; border-radius: 4px; outline: 1px solid #fff; padding-left: 18px; font: 21.700px/49px "DejaVu Sans Mono", monospace; color: #333; margin-left: 1px; white-space: pre; }
.go { width: 251px; margin: 1px 0; background: #5bc621; border-radius: 0 4px 4px 0; color: #fff; font-size: 22.600px; line-height: 50px; text-align: center; }
.hint { margin-top: 12px; font-size: 18px; line-height: 30px; font-style: italic; color: #8c8c8c; }
a { color: #1f6be0; }
.foot { margin-top: 18px; display: flex; justify-content: space-between; width: 1022.500px; font-size: 18px; line-height: 27.200px; color: #7b7b7b; }
.left { letter-spacing: -.24px; }
.right { text-align: right; letter-spacing: -.13px; }

.ref { margin: -3px 0 0 32.500px; display: grid; grid-template-columns: 73px 1fr; font-size: 17.350px; line-height: 25.130px; color: #666; white-space: nowrap; }
.ref dt { letter-spacing: -.1px; }
.ref dd { font-style: italic; }

.scroll { width: 18px; height: 904px; margin-left: auto; background: #f0f0ef; display: flex; flex-direction: column; align-items: center; padding: 6px 0 5px; }
.thumb { width: 18px; height: 600px; margin-top: 126px; background: #cdcccb; }
.down { margin-top: auto; }

/* taskbar */
.taskbar { height: 50px; background: #1d1d1d; display: flex; }
.start { width: 60px; display: flex; align-items: center; justify-content: center; }
.find { width: 430px; background: #333; border: 1px solid #5c5c5c; border-bottom: 0; display: flex; align-items: center; padding: 0 0 2px 14px; gap: 13px; color: #d8d8d8; font-size: 18.200px; margin-right: 4px; }
.app { width: 62px; display: flex; align-items: center; justify-content: center; position: relative; }
.app.active { width: 61px; background: #4a4a4a; }
.app.run::after { content: ""; position: absolute; left: 6px; right: 5px; bottom: 0; height: 2px; background: #8fbfe8; }
.app.active::after { content: ""; position: absolute; left: 0; right: 0; bottom: 0; height: 2px; background: #8fbfe8; }
.pc { font: 700 10px "Open Sans", sans-serif; fill: #fff; }
.tray { margin-left: auto; display: flex; padding-right: 4px; }
.tray span { width: 30px; display: flex; align-items: center; justify-content: center; }
.clock { width: 88px; padding-top: 2px; border-right: 1px solid #666; color: #fff; font-size: 15px; letter-spacing: -.62px; line-height: 23px; text-align: center; }

/* picture-in-picture call window */
.pip { position: absolute; left: 1356px; top: 469px; width: 564px; height: 456px; background: #fff; overflow: hidden; }
.piphead { height: 40px; background: #171a1e; display: flex; align-items: center; color: #fff; font-size: 15px; letter-spacing: -.24px; padding-left: 17px; }
.piphead span { margin-left: 10.500px; }
.gear { margin-left: auto; margin-right: -8px; }
.pipbody { position: relative; height: 416px; padding-top: 121px; }
.pipbody h1 { font: 400 46px/60px Lato, sans-serif; letter-spacing: .52px; color: #3c4043; margin-left: 83px; white-space: nowrap; }
.back { margin: 39px 25px 0 auto; width: 200px; height: 45px; border-radius: 4px; background: #1a73e8; color: #fff; font: 700 18.800px/45px Lato, sans-serif; text-align: right; padding-right: 29.500px; }
.card { margin: 39.500px 38px 0 90.500px; height: 180px; border-radius: 10px; box-shadow: 0 1px 4px rgba(60, 64, 67, .4); padding: 31px 0 0 31.500px; }
.q { font: 400 21px/46px Lato, sans-serif; letter-spacing: .36px; color: #202124; white-space: nowrap; }
.stars { display: flex; gap: 55.600px; margin: 24px 0 0 25.500px; }
.toast { position: absolute; left: 30px; top: 217px; width: 426px; height: 60px; border-radius: 4px; background: #4a4d50; color: #fff; font: 400 18px/62px Roboto, sans-serif; text-align: center; box-shadow: 0 3px 5px rgba(0, 0, 0, .3), 0 6px 22px rgba(0, 0, 0, .2); -webkit-text-stroke: .25px #fff; }
.feedback { position: absolute; left: 19.500px; top: 376px; display: flex; gap: 11.500px; font: 400 18.500px/22px Lato, sans-serif; letter-spacing: .15px; color: #5f6368; }

/* strip of the second monitor */
.second { width: 10px; height: 1042px; margin-top: 1px; display: flex; flex-direction: column; overflow: hidden; }
.second svg { margin-left: 1px; }
.s-tabs { height: 52px; background: #191c21; border-top: 2px solid #c8b10a; padding-top: 9px; }
.s-bar { height: 81px; background: #3b4550; border-bottom: 1px solid #101318; padding-top: 20px; }
.s-page { height: 298px; background: #ede8e4; }
.s-head { height: 40px; background: #171a1e; padding-top: 13px; }
.s-dark { height: 101px; background: #202124; }
.s-gray { height: 161px; background: #36383b; border-bottom-right-radius: 4px; }
.s-dark.grow { height: 178px; }
.s-end { flex: 1; background: #ede8e4; }
```
